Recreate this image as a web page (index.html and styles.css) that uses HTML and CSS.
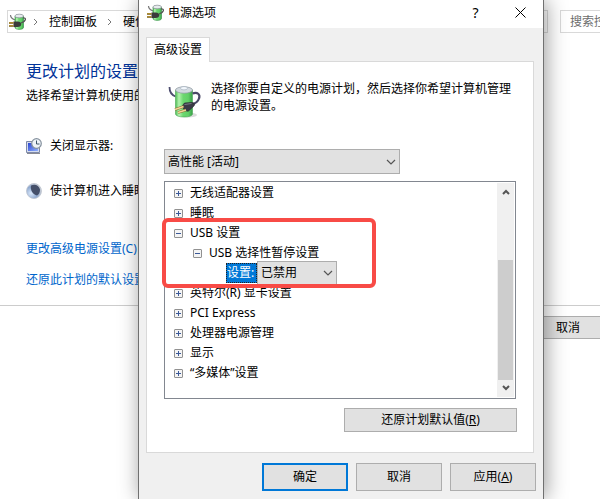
FILE: index.html
```html
<!DOCTYPE html>
<html lang="zh-CN">
<head>
    <meta charset="UTF-8">
    <meta name="viewport" content="width=device-width, initial-scale=1.0">
    <title>电源选项</title>
    <link rel="stylesheet" href="styles.css">
</head>
<body>

    <!-- Shared icon shapes -->
    <svg class="defs" aria-hidden="true">
        <defs>
            <linearGradient id="green" x1="0" x2="1" y1="0" y2="0">
                <stop offset="0" stop-color="#4cbc54"/>
                <stop offset=".2" stop-color="#b4f2ae"/>
                <stop offset=".45" stop-color="#6cd870"/>
                <stop offset=".75" stop-color="#62d068"/>
                <stop offset="1" stop-color="#38a048"/>
            </linearGradient>
            <linearGradient id="screen" x1="0" x2="1" y1="0" y2="1">
                <stop offset="0" stop-color="#2c46d0"/>
                <stop offset="1" stop-color="#8fb0ff"/>
            </linearGradient>
            <radialGradient id="night" cx=".3" cy=".65" r=".7">
                <stop offset="0" stop-color="#dbe9fb"/>
                <stop offset=".6" stop-color="#8fa9d0"/>
                <stop offset="1" stop-color="#c9ced6"/>
            </radialGradient>
            <symbol id="battery" viewBox="0 0 34 34">
                <ellipse cx="20" cy="30" rx="9" ry="2.500" fill="#dcdcdc"/>
                <path d="M1.500 2c0 4 2 8 6 9.500" fill="none" stroke="#4e4e70" stroke-width="1.800"/>
                <path d="M7.500 5v24c0 4 17 4 17 0V5z" fill="url(#green)" stroke="#4ca858" stroke-width=".6"/>
                <ellipse cx="16" cy="5" rx="8.500" ry="3.200" fill="#d3dae0" stroke="#8c979f" stroke-width=".7"/>
                <ellipse cx="16" cy="3.200" rx="3.500" ry="1.700" fill="#f2f7fc" stroke="#9aa8b5" stroke-width=".6"/>
                <path d="M24.500 8.500c5-2 8 1 6.500 5-1 3-4 5-7 6" fill="none" stroke="#4a4866" stroke-width="2.200"/>
                <path d="M14.500 20.500l2-2.500 7-.5c3 0 4 2 2 4l-5 4.500c-2 1-6-2-6-5.500z" fill="#3a3a46" stroke="#24242e" stroke-width=".6"/>
                <path d="M16.500 19.500l7-1" stroke="#7c7c88"/>
                <path d="M7 24.500l8.500-3M10 27.500l8-2.500" stroke="#8a6d34" stroke-width="2.400"/>
                <path d="M7 24.500l8.500-3M10 27.500l8-2.500" stroke="#f0d898" stroke-width="1.400"/>
            </symbol>
            <symbol id="battery-small" viewBox="0 0 17 18">
                <path d="M1.500 2c0 2.500 2 4 4.500 5" fill="none" stroke="#777" stroke-width="1.200"/>
                <path d="M6 3v11.500c0 2.500 8.500 2.500 8.500 0V3z" fill="url(#green)" stroke="#2f8a42" stroke-width=".6"/>
                <ellipse cx="10.200" cy="3" rx="4.300" ry="1.800" fill="#e6ebed" stroke="#848d92" stroke-width=".7"/>
                <path d="M14 5c3.500-.5 3.500 3-2 5" fill="none" stroke="#555" stroke-width="1.300"/>
                <path d="M4.500 8.500h4c5 0 5 5.500 0 5.500h-4z" fill="#3b3b3b"/>
                <path d="M0 9.800h4.500M0 12.800h4.500" stroke="#5a4517" stroke-width="1.800"/>
                <path d="M0 9.800h4.500M0 12.800h4.500" stroke="#e0b843" stroke-width=".9"/>
            </symbol>
            <symbol id="chevron" viewBox="0 0 10 6">
                <path d="M1 1l4 4 4-4" fill="none" stroke="#555" stroke-width="1.200"/>
            </symbol>
        </defs>
    </svg>

    <!-- Control panel page -->
    <main class="page">
        <header class="toolbar">
            <nav class="address">
                <svg class="icon-app" aria-hidden="true"><use href="#battery-small"/></svg>
                <svg class="crumb-arrow" viewBox="0 0 4 8"><path d="M0 1l3 3-3 3"/></svg>
                <a href="#">控制面板</a>
                <svg class="crumb-arrow" viewBox="0 0 4 8"><path d="M0 1l3 3-3 3"/></svg>
                <a href="#">硬件</a>
            </nav>
            <input class="search" type="text" placeholder="搜索控制面板" aria-label="搜索控制面板">
        </header>

        <section class="plan">
            <h1>更改计划的设置</h1>
            <p class="intro">选择希望计算机使用的</p>
            <div class="plan-rows">
                <div class="plan-row">
                    <svg class="plan-icon" viewBox="0 0 16 16" aria-hidden="true">
                        <path d="M.5 3.500h13v11H.5z" fill="#d5dced" stroke="#7f8aa8"/>
                        <rect x="2" y="5" width="10" height="8" fill="url(#screen)"/>
                        <path d="M1 15.500h13" stroke="#8a8a92"/>
                        <circle cx="10.500" cy="5.500" r="4.800" fill="#edf3f8" stroke="#85919e" stroke-width="1.200"/>
                        <path d="M10.500 2.500v3.500h3" fill="none" stroke="#3c5468"/>
                    </svg>
                    <span>关闭显示器:</span>
                </div>
                <div class="plan-row">
                    <svg class="plan-icon" viewBox="0 0 16 16" aria-hidden="true">
                        <circle cx="8" cy="8" r="7.500" fill="url(#night)" stroke="#bcc3ce" stroke-width=".8"/>
                        <path d="M5 2.500c4-2 8 0 9 4 0 3-1 5-3 6-4-1-7-5-6-10z" fill="#45506a"/>
                    </svg>
                    <span>使计算机进入睡眠</span>
                </div>
            </div>
            <div class="plan-links">
                <a href="#">更改高级电源设置(C)</a>
                <a href="#">还原此计划的默认设置</a>
            </div>
        </section>

        <footer class="page-footer">
            <button class="btn" type="button">取消</button>
        </footer>
    </main>

    <!-- Power options window -->
    <div class="dialog" role="dialog" aria-labelledby="dialog-title">
        <header class="titlebar">
            <svg class="icon-app" aria-hidden="true"><use href="#battery-small"/></svg>
            <h2 id="dialog-title">电源选项</h2>
            <button class="title-btn" type="button" aria-label="帮助">?</button>
            <button class="title-btn" type="button" aria-label="关闭">
                <svg class="icon-close" viewBox="0 0 11 11"><path d="M.5.5l10 10M10.500.5l-10 10"/></svg>
            </button>
        </header>

        <div class="tabs" role="tablist">
            <button class="tab" type="button" role="tab" aria-selected="true">高级设置</button>
        </div>

        <div class="panel">
            <div class="about">
                <svg class="icon-battery" aria-hidden="true"><use href="#battery"/></svg>
                <p>选择你要自定义的电源计划，然后选择你希望计算机管理的电源设置。</p>
            </div>

            <div class="combo combo-plan">
                <select aria-label="电源计划">
                    <option>高性能 [活动]</option>
                </select>
                <svg class="chevron" aria-hidden="true"><use href="#chevron"/></svg>
            </div>

            <div class="tree-box">
                <ul class="tree">
                    <li><div class="node"><button class="toggle plus" type="button" aria-label="展开"></button>无线适配器设置</div></li>
                    <li><div class="node"><button class="toggle plus" type="button" aria-label="展开"></button>睡眠</div></li>
                    <li class="marked">
                        <div class="node"><button class="toggle" type="button" aria-label="折叠"></button>USB 设置</div>
                        <ul>
                            <li>
                                <div class="node"><button class="toggle" type="button" aria-label="折叠"></button>USB 选择性暂停设置</div>
                                <div class="node setting">
                                    <label for="usb-suspend">设置:</label>
                                    <div class="combo">
                                        <select id="usb-suspend">
                                            <option>已禁用</option>
                                            <option>已启用</option>
                                        </select>
                                        <svg class="chevron" aria-hidden="true"><use href="#chevron"/></svg>
                                    </div>
                                </div>
                            </li>
                        </ul>
                    </li>
                    <li><div class="node"><button class="toggle plus" type="button" aria-label="展开"></button>英特尔(R) 显卡设置</div></li>
                    <li><div class="node"><button class="toggle plus" type="button" aria-label="展开"></button>PCI Express</div></li>
                    <li><div class="node"><button class="toggle plus" type="button" aria-label="展开"></button>处理器电源管理</div></li>
                    <li><div class="node"><button class="toggle plus" type="button" aria-label="展开"></button>显示</div></li>
                    <li><div class="node"><button class="toggle plus" type="button" aria-label="展开"></button>“多媒体”设置</div></li>
                </ul>
                <div class="scrollbar">
                    <svg class="scroll-arrow" viewBox="0 0 8 6"><path d="M1 5l3-3 3 3"/></svg>
                    <div class="scroll-thumb"></div>
                    <svg class="scroll-arrow" viewBox="0 0 8 6"><path d="M1 1l3 3 3-3"/></svg>
                </div>
            </div>

            <button class="btn restore" type="button">还原计划默认值(<u>R</u>)</button>
        </div>

        <footer class="dialog-footer">
            <button class="btn primary" type="button">确定</button>
            <button class="btn" type="button">取消</button>
            <button class="btn" type="button">应用(<u>A</u>)</button>
        </footer>
    </div>

</body>
</html>
```

FILE: styles.css
```css
/* General Styling */
*, *::before, *::after {
    box-sizing: border-box;
}
body {
    margin: 0;
    position: relative;
    min-height: 100vh;
    overflow: hidden;
    background: #fff;
    color: #000;
    font-family: "Noto Sans", "Noto Sans CJK SC", sans-serif;
    font-size: 12px;
    line-height: 20px;
}
h1, h2, p, ul {
    margin: 0;
    padding: 0;
    font-weight: normal;
}
ul {
    list-style: none;
}
button, select, input {
    font: inherit;
    color: inherit;
    margin: 0;
    padding: 0;
    border-radius: 0;
}
a {
    color: inherit;
    text-decoration: none;
}
svg {
    flex: none;
}
.defs {
    position: absolute;
    width: 0;
    height: 0;
}
.icon-app {
    width: 17px;
    height: 18px;
}

/* Buttons */
.btn {
    background: #e1e1e1;
    border: 1px solid #adadad;
}
.btn.primary {
    border: 2px solid #0078d7;
}

/* Address bar */
.toolbar {
    display: flex;
    gap: 12px;
    padding: 10px 0 0 7px;
}
.address {
    flex: 1;
    display: flex;
    align-items: center;
    height: 23px;
    padding-left: 1px;
    border: 1px solid #d9d9d9;
    white-space: nowrap;
}
.address a {
    margin: 0 11px;
}
.crumb-arrow {
    width: 4px;
    height: 8px;
    fill: none;
    stroke: #777;
}
.address .icon-app {
    margin-right: 8px;
}
.search {
    width: 40px;
    height: 23px;
    padding-left: 9px;
    border: 1px solid #d9d9d9;
    border-right: 0;
    background: #fff;
}
.search::placeholder {
    color: #6d6d6d;
    opacity: 1;
}

/* Plan settings */
.plan {
    padding: 26px 26px 15px;
    white-space: nowrap;
}
.plan h1 {
    color: #003399;
    font-size: 16px;
    line-height: 24px;
}
.intro {
    margin-top: 3px;
}
.plan-rows {
    display: grid;
    gap: 25px;
    margin-top: 30px;
}
.plan-row {
    display: flex;
    align-items: center;
    gap: 8px;
}
.plan-icon {
    width: 16px;
    height: 16px;
}
.plan-links {
    display: grid;
    justify-items: start;
    gap: 11px;
    margin-top: 38px;
    color: #0066cc;
}
.page-footer {
    display: flex;
    justify-content: flex-end;
    border-top: 1px solid #ccc;
    padding-top: 10px;
}
.page-footer .btn {
    width: 65px;
    height: 23px;
    border-right: 0;
}

/* Dialog window, lies over the page */
.dialog {
    position: absolute;
    top: 0;
    bottom: 0;
    left: 138px;
    width: 406px;
    background: #f0f0f0;
    border: solid #707070;
    border-width: 0 1px;
    box-shadow: 2px 0 20px rgba(0, 0, 0, 0.4);
}
.titlebar {
    display: flex;
    align-items: center;
    height: 28px;
    padding: 0 0 3px 8px;
    background: #fff;
}
.titlebar h2 {
    flex: 1;
    font-size: 12px;
    margin-left: 4px;
}
.title-btn {
    width: 45px;
    height: 25px;
    border: 0;
    background: none;
    font-size: 14px;
}
.icon-close {
    width: 11px;
    height: 11px;
    fill: none;
    stroke: #000;
}

/* Tab and panel */
.tabs {
    padding: 9px 7px 0;
}
.tab {
    position: relative;
    display: block;
    width: 64px;
    height: 25px;
    margin-bottom: -1px;
    background: #fff;
    border: 1px solid #d9d9d9;
    border-bottom: 0;
}
.panel {
    margin: 0 9px 0 7px;
    padding: 18px 16px 20px 17px;
    background: #fff;
    border: 1px solid #d9d9d9;
}
.about {
    display: flex;
    gap: 9px;
    padding-left: 4px;
    height: 69px;
}
.about p {
    line-height: 17px;
}
.icon-battery {
    width: 34px;
    height: 34px;
    margin-top: 5px;
}

/* Drop-downs */
.combo {
    display: grid;
    align-items: center;
}
.combo select,
.combo .chevron {
    grid-area: 1 / 1;
}
.combo select {
    appearance: none;
    width: 100%;
    height: 25px;
    padding-left: 3px;
    background: #e1e1e1;
    border: 1px solid #adadad;
}
.chevron {
    justify-self: end;
    width: 10px;
    height: 6px;
    margin-right: 4px;
    pointer-events: none;
}
.combo-plan {
    width: 236px;
}

/* Settings tree */
.tree-box {
    display: flex;
    width: 352px;
    margin-top: 7px;
    padding: 1px;
    border: 1px solid #828790;
}
.tree {
    flex: 1;
    padding: 0 0 14px 8px;
}
.tree ul {
    padding-left: 19px;
}
.node {
    display: flex;
    align-items: center;
    height: 20px;
    gap: 7px;
}
.toggle {
    width: 9px;
    height: 9px;
    border: 1px solid #919191;
    border-radius: 1px;
    background: linear-gradient(#3b5998, #3b5998) center / 5px 1px no-repeat, #f4f4f4;
}
.toggle.plus {
    background: linear-gradient(#3b5998, #3b5998) center / 5px 1px no-repeat,
        linear-gradient(#3b5998, #3b5998) center / 1px 5px no-repeat, #f4f4f4;
}
.setting {
    gap: 0;
    padding-left: 33px;
}
.setting label {
    width: 31px;
    padding: 0 1px;
    background: #0078d7;
    color: #fff;
    outline: 1px dotted #222;
    outline-offset: -1px;
}
.setting .combo {
    width: 80px;
}

/* Red frame around the USB settings */
.marked {
    position: relative;
}
.marked::after {
    content: "";
    position: absolute;
    top: -5px;
    left: -12px;
    width: 214px;
    height: 70px;
    border: 4px solid #f84b46;
    border-radius: 6px;
    pointer-events: none;
}

/* Scrollbar */
.scrollbar {
    display: flex;
    flex-direction: column;
    align-items: center;
    width: 17px;
    padding: 6px 0;
    background: #f0f0f0;
}
.scroll-arrow {
    width: 8px;
    height: 6px;
    fill: none;
    stroke: #555;
    stroke-width: 2;
}
.scroll-thumb {
    width: 15px;
    height: 120px;
    margin: 65px 0 auto;
    background: #cdcdcd;
}
.restore {
    display: block;
    width: 173px;
    height: 24px;
    margin: 9px 0 0 auto;
}
.dialog-footer {
    display: flex;
    justify-content: flex-end;
    gap: 8px;
    padding: 10px 7px;
}
.dialog-footer .btn {
    width: 86px;
    height: 28px;
}
```
